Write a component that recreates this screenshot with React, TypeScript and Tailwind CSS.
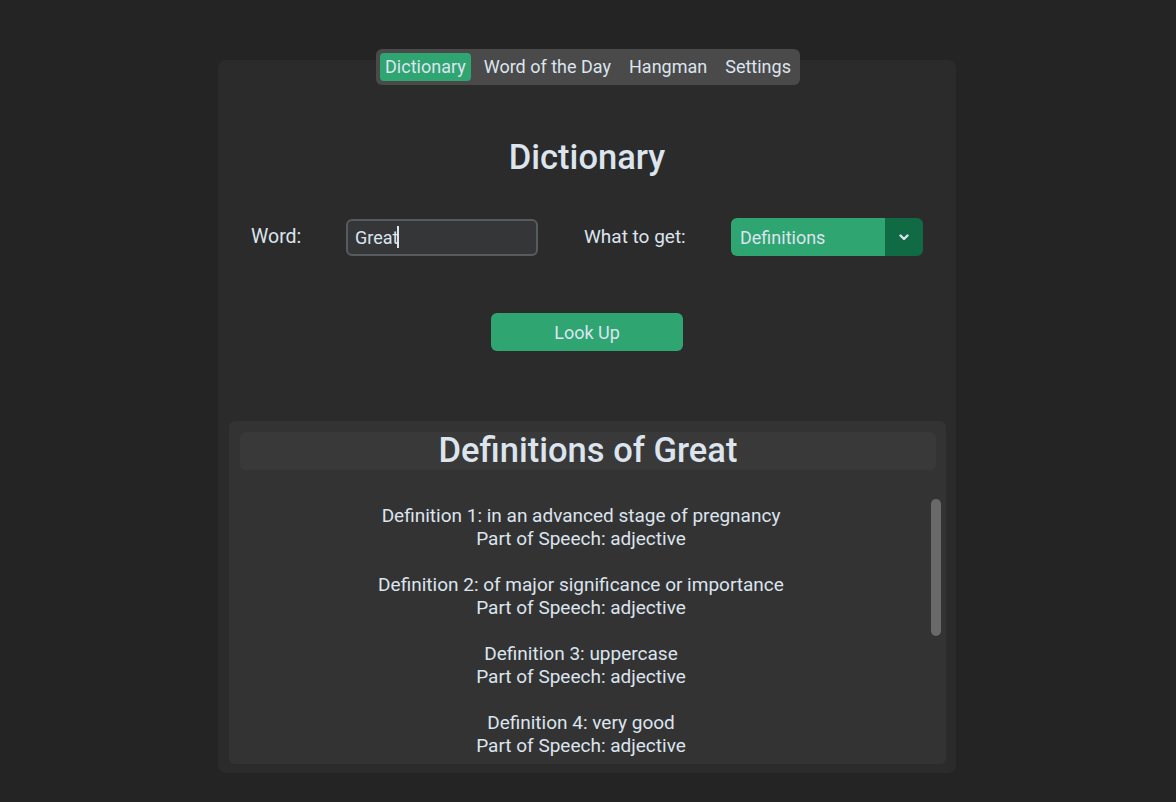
import { useState } from 'react';

const TABS = ['Dictionary', 'Word of the Day', 'Hangman', 'Settings'];

const DEFINITIONS = [
  { text: 'in an advanced stage of pregnancy', pos: 'adjective' },
  { text: 'of major significance or importance', pos: 'adjective' },
  { text: 'uppercase', pos: 'adjective' },
  { text: 'very good', pos: 'adjective' },
];

const App = () => {
  const [activeTab, setActiveTab] = useState('Dictionary');
  const [word, setWord] = useState('Great');

  return (
    <div className="flex h-[802px] w-full flex-col items-center bg-[#242424] pt-[49px] font-['Roboto',sans-serif] text-[#dce4ee]">
      {/* tab selector sits over the top edge of the panel */}
      <div className="relative z-10 flex h-[36px] items-center gap-[8px] rounded-[6px] bg-[#4a4a4a] px-[4px]">
        {TABS.map((tab) => (
          <button
            key={tab}
            type="button"
            onClick={() => setActiveTab(tab)}
            className={`h-[28px] rounded-[4px] px-[5px] text-[18px] leading-[28px] ${
              activeTab === tab ? 'bg-[#2fa572]' : 'bg-transparent'
            }`}
          >
            {tab}
          </button>
        ))}
      </div>

      <div className="mr-[2px] mt-[-25px] flex h-[713px] w-[738px] flex-col rounded-[8px] bg-[#2b2b2b]">
        <h1 className="mt-[77px] text-center text-[34.5px] font-medium leading-[40px]">Dictionary</h1>

        <div className="mt-[41px] flex h-[38px] items-center">
          <span className="ml-[33px] w-[95px] text-[19.5px]">Word:</span>
          <div className="flex h-[37px] w-[192px] items-center rounded-[6px] border-2 border-[#565b5e] bg-[#343638] pl-[7px]">
            <input
              value={word}
              onChange={(event) => setWord(event.target.value)}
              className="bg-transparent text-[18px] text-[#dce4ee] outline-none"
              style={{ width: `${word.length * 8.3}px` }}
            />
            <span className="h-[22px] w-[2px] bg-[#dce4ee]" />
          </div>
          <span className="ml-[46px] w-[147px] text-[19px]">What to get:</span>
          <div className="flex h-[38px] w-[192px] overflow-hidden rounded-[6px]">
            <div className="flex flex-1 items-center bg-[#2fa572] pl-[9px] text-[18px]">Definitions</div>
            <div className="flex w-[38px] items-center justify-center bg-[#106a43]">
              <svg width="10" height="7" viewBox="0 0 10 7" fill="none">
                <path d="M1.5 1.5 L5 5 L8.5 1.5" stroke="#dce4ee" strokeWidth="2.4" strokeLinecap="round" strokeLinejoin="round" />
              </svg>
            </div>
          </div>
        </div>

        <button
          type="button"
          className="mx-auto mt-[57px] h-[38px] w-[192px] rounded-[6px] bg-[#2fa572] text-[18px] text-[#dce4ee]"
        >
          Look Up
        </button>

        <div className="mb-[9px] ml-[11px] mr-[10px] mt-[70px] flex min-h-0 flex-1 flex-col rounded-[6px] bg-[#333333] pt-[11px]">
          <div className="ml-[11px] mr-[10px] flex h-[38px] items-center justify-center rounded-[6px] bg-[#393939] text-[34.5px] font-medium">
            Definitions of Great
          </div>
          <div className="flex min-h-0 flex-1 pl-[11px] pr-[5px]">
            <div className="min-h-0 flex-1 overflow-hidden pt-[34px] text-center text-[19px] leading-[23px]">
              {DEFINITIONS.map((definition, index) => (
                <div key={index} className="mb-[23px] last:mb-0">
                  <div>
                    Definition {index + 1}: {definition.text}
                  </div>
                  <div>Part of Speech: {definition.pos}</div>
                </div>
              ))}
            </div>
            <div className="ml-[9px] w-[10px] pt-[29px]">
              <div className="h-[137px] w-[10px] rounded-full bg-[#696969]" />
            </div>
          </div>
        </div>
      </div>
    </div>
  );
};

export default App;
